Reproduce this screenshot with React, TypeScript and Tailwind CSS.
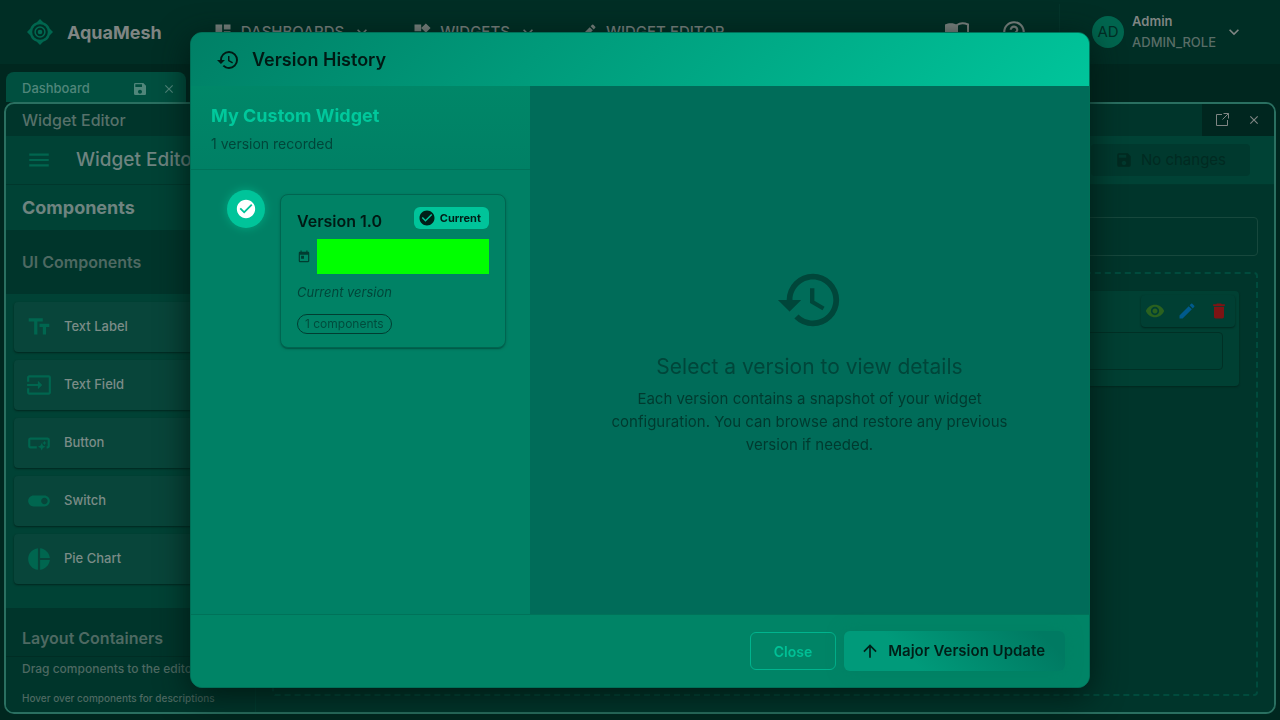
import type { ReactNode } from "react";
import {
  MdArrowUpward,
  MdCheckCircle,
  MdClose,
  MdDashboard,
  MdDelete,
  MdEdit,
  MdHelpOutline,
  MdHistory,
  MdInput,
  MdKeyboardArrowDown,
  MdMenu,
  MdPieChart,
  MdSave,
  MdSmartButton,
  MdTextFields,
  MdToday,
  MdToggleOn,
  MdVisibility,
  MdWidgets,
} from "react-icons/md";

function Logo() {
  return (
    <svg viewBox="0 0 26 26" className="size-[26px]" fill="none" aria-hidden="true">
      <path
        d="M13 0 L16.2 3.2 A10.3 10.3 0 0 1 22.8 9.8 L26 13 L22.8 16.2 A10.3 10.3 0 0 1 16.2 22.8 L13 26 L9.8 22.8 A10.3 10.3 0 0 1 3.2 16.2 L0 13 L3.2 9.8 A10.3 10.3 0 0 1 9.8 3.2 Z"
        fill="#00664f"
      />
      <circle cx="13" cy="13" r="7.8" fill="#002e25" />
      <circle cx="13" cy="13" r="4.9" stroke="#006a52" strokeWidth="1.5" />
      <circle cx="13" cy="13" r="2.3" fill="#006a52" />
    </svg>
  );
}

function BookIcon() {
  return (
    <svg viewBox="0 0 24 20" className="h-5 w-6" fill="none" aria-hidden="true">
      <path d="M12 3C9.500 1 4 .5 0 2.500V18C4 16.500 9 16.500 12 19Z" fill="currentColor" />
      <path d="M12 3C14.500 1.300 19 .9 23 2.500V17.200C19 16 15 16.300 12 18.500Z" stroke="currentColor" strokeWidth="2" />
    </svg>
  );
}

function PopoutIcon() {
  return (
    <svg viewBox="0 0 14 14" className="size-[14px]" fill="none" stroke="currentColor" aria-hidden="true">
      <path d="M7 1.5H1.5V12.5H12.5V7M8.500 .5H13.500V5.500M13.500 .5L7.500 6.500" />
    </svg>
  );
}

function NavButton({ icon, label, arrow }: { icon: ReactNode; label: string; arrow?: boolean }) {
  return (
    <button className="flex items-center gap-2 text-[15px] font-medium text-[#7f8583]">
      <span className="text-[20px]">{icon}</span>
      {label}
      {arrow && <MdKeyboardArrowDown className="size-5" />}
    </button>
  );
}

function Navbar() {
  return (
    <header className="flex h-16 shrink-0 items-center bg-[#002e25] pr-9 pl-[27px] shadow-[0_1px_3px_#001811]">
      <Logo />
      <span className="ml-[14px] text-[18px] font-bold text-[#7f8583]">AquaMesh</span>
      <nav className="ml-[51px] flex items-center gap-10">
        <NavButton icon={<MdDashboard />} label="DASHBOARDS" arrow />
        <NavButton icon={<MdWidgets />} label="WIDGETS" arrow />
        <NavButton icon={<MdEdit />} label="WIDGET EDITOR" />
      </nav>
      <div className="ml-auto flex items-center">
        <button aria-label="Documentation" className="text-[#7f8583]">
          <BookIcon />
        </button>
        <button aria-label="Help" className="ml-8 text-[26px] text-[#7f8583]">
          <MdHelpOutline />
        </button>
        <div className="ml-8 h-14 w-px bg-[#04352b]" />
        <button className="ml-8 flex items-center text-left">
          <span className="flex size-8 items-center justify-center rounded-full bg-[#00664f] text-[15px] text-[#002e25]">
            AD
          </span>
          <span className="ml-2 flex flex-col gap-1">
            <span className="text-[13px] leading-[17px] font-semibold text-[#7f8583]">Admin</span>
            <span className="text-[13px] leading-[17px] font-medium text-[#596d67]">ADMIN_ROLE</span>
          </span>
          <MdKeyboardArrowDown className="ml-2 size-5 text-[#7f8583]" />
        </button>
      </div>
    </header>
  );
}

const components = [
  { label: "Text Label", icon: MdTextFields },
  { label: "Text Field", icon: MdInput },
  { label: "Button", icon: MdSmartButton },
  { label: "Switch", icon: MdToggleOn },
  { label: "Pie Chart", icon: MdPieChart },
];

function Sidebar() {
  return (
    <aside className="flex w-[250px] shrink-0 flex-col border-r border-[#003d31] bg-[#004235]">
      <h2 className="flex h-[45px] shrink-0 items-center px-4 text-[18px] font-bold text-[#6f8480]">Components</h2>
      <h3 className="flex h-16 shrink-0 items-center bg-[#00352b] px-4 text-[16px] font-semibold text-[#4e6962]">
        UI Components
      </h3>
      <ul className="flex shrink-0 flex-col gap-2 p-2">
        {components.map(({ label, icon: Icon }) => (
          <li
            key={label}
            className="flex h-[50px] items-center rounded bg-[#08453a] px-3 text-[13px] font-medium text-[#7b8c87] shadow-[0_1px_2px_#00261e]"
          >
            <Icon className="size-[26px] text-[#00664f]" />
            <span className="ml-3">{label}</span>
          </li>
        ))}
      </ul>
      <h3 className="mt-4 flex min-h-0 flex-1 items-center bg-[#00352b] px-4 pt-3 text-[16px] font-semibold text-[#4e6962]">
        Layout Containers
      </h3>
      <footer className="flex h-14 shrink-0 flex-col justify-between border-t border-[#002d24] bg-[#00352b] px-4 pt-1 pb-2 font-medium whitespace-nowrap text-[#4e6962]">
        <p className="text-[12px] leading-4">Drag components to the editor</p>
        <p className="text-[10px] leading-3">Hover over components for descriptions</p>
      </footer>
    </aside>
  );
}

function Canvas() {
  return (
    <main className="flex min-w-0 flex-1 flex-col gap-4 bg-[#00352b] px-4 pt-8 pb-4">
      <input
        aria-label="Widget name"
        className="h-[39px] shrink-0 rounded border border-[#17483d] bg-transparent px-3 text-[#4e6962]"
      />
      <section className="flex-1 rounded border-2 border-dashed border-[#004b3d] p-[17px]">
        <div className="rounded bg-[#004033] px-4 pt-1 pb-4 shadow-[0_1px_2px_#00261e]">
          <div className="-mr-3 flex justify-end">
            <div className="flex h-8 items-center gap-3 rounded bg-[#003f33] pr-1.5 pl-1 text-[20px] shadow-[0_1px_2px_#00261e]">
              <button aria-label="Show" className="text-[#2a611f]">
                <MdVisibility />
              </button>
              <button aria-label="Edit" className="text-[#005a8c]">
                <MdEdit />
              </button>
              <button aria-label="Delete" className="text-[#7d1414]">
                <MdDelete />
              </button>
            </div>
          </div>
          <input
            aria-label="Text field preview"
            className="mt-[5px] block h-[38px] w-full rounded border border-[#003025] bg-transparent px-3 text-[#4e6962]"
          />
        </div>
      </section>
    </main>
  );
}

function Workspace() {
  return (
    <div className="flex min-h-0 flex-1 flex-col bg-[#00271f] px-1 pt-2 pb-1.5">
      <div className="ml-0.5 flex h-[30px] w-[180px] shrink-0 items-center rounded-t-lg bg-[#004f3f] px-4 pt-1 text-[13px] font-medium text-[#50867a]">
        Dashboard
        <button aria-label="Save dashboard" className="ml-auto">
          <MdSave className="size-4" />
        </button>
        <button aria-label="Close dashboard" className="-mr-1.5 ml-3.5">
          <MdClose className="size-3.5" />
        </button>
      </div>
      <div className="flex min-h-0 flex-1 flex-col overflow-hidden rounded-[10px] border-2 border-[#2a7061] bg-[#00352b]">
        <div className="flex h-8 shrink-0 items-center justify-between pl-4 text-[16px] font-medium text-[#57716a]">
          Widget Editor
          <div className="flex h-full items-center gap-[18px] bg-[#00261f] px-[13px] text-[#7f8583]">
            <button aria-label="Pop out">
              <PopoutIcon />
            </button>
            <button aria-label="Close panel">
              <MdClose className="size-3.5" />
            </button>
          </div>
        </div>
        <div className="flex h-[49px] shrink-0 items-center border-b border-[#00372c] bg-[#004235] pr-6 pl-5">
          <button aria-label="Toggle sidebar">
            <MdMenu className="size-[26px] text-[#00664f]" />
          </button>
          <h1 className="ml-6 text-[19px] font-medium text-[#6f8480]">Widget Editor</h1>
          <button className="ml-auto flex h-8 items-center gap-2 rounded bg-[#00392e] px-6 text-[15px] text-[#002a21]" disabled>
            <MdSave className="size-[18px]" />
            No changes
          </button>
        </div>
        <div className="flex min-h-0 flex-1">
          <Sidebar />
          <Canvas />
        </div>
      </div>
    </div>
  );
}

function VersionCard() {
  return (
    <article className="flex flex-1 flex-col items-start rounded-lg border border-[#006550] bg-[#008265] px-4 pt-3 pb-[13px] shadow-[0_2px_1px_-1px_#005a48,0_1px_3px_#006853]">
      <div className="flex w-full items-center justify-between">
        <h4 className="pt-0.5 text-[16px] leading-6 font-semibold text-[#001a14]">Version 1.0</h4>
        <span className="flex h-[22px] items-center gap-1 self-start rounded-md bg-[#00c49a] pr-2 pl-1 text-[11px] font-bold text-[#001f18]">
          <MdCheckCircle className="size-[18px]" />
          Current
        </span>
      </div>
      <div className="mt-1.5 flex w-full items-center gap-1.5">
        <MdToday className="size-3.5 text-[#003d31]" />
        <time className="h-[35px] flex-1 bg-[#00ff00]" />
      </div>
      <p className="mt-2 text-[13px] leading-5 text-[#00463a] italic">Current version</p>
      <span className="mt-3 flex h-5 items-center rounded-full border border-[#003d31] px-[7px] text-[12px] text-[#004c3d]">
        1 components
      </span>
    </article>
  );
}

function VersionDialog() {
  return (
    <div className="fixed inset-0 flex items-center justify-center p-8">
      <div
        role="dialog"
        aria-modal="true"
        aria-labelledby="dialog-title"
        className="flex h-full w-full max-w-[900px] flex-col overflow-hidden rounded-xl border border-[#007058] bg-[#008265] shadow-[0_8px_32px_#001a14]"
      >
        <header className="flex h-[53px] shrink-0 items-center gap-3 bg-linear-135 from-[#008066] to-[#00c59b] px-[25px] text-[#001a14]">
          <MdHistory className="size-6" />
          <h2 id="dialog-title" className="text-[18px] font-semibold">
            Version History
          </h2>
        </header>
        <div className="flex min-h-0 flex-1">
          <section className="flex w-[339px] shrink-0 flex-col bg-[#008065]">
            <div className="flex h-21 shrink-0 flex-col justify-center gap-1.5 border-b border-[#007259] bg-linear-to-b from-[#008768] to-[#008065] px-5 pt-[3px]">
              <h3 className="text-[18px] leading-6 font-bold text-[#00c89c]">My Custom Widget</h3>
              <p className="text-[14px] leading-5 text-[#00463a]">1 version recorded</p>
            </div>
            <div className="flex items-start gap-[15px] p-6 pl-9">
              <span className="-mt-1 flex size-[38px] items-center justify-center rounded-full bg-[#00c49a] text-white shadow-[0_0_10px_#00a883]">
                <MdCheckCircle className="size-[22px]" />
              </span>
              <VersionCard />
            </div>
          </section>
          <section className="flex flex-1 flex-col items-center justify-center bg-[#006c59] px-6 pt-5 text-center text-[#00463a]">
            <MdHistory className="size-[70px]" />
            <h3 className="mt-4 text-[21px] leading-8">Select a version to view details</h3>
            <p className="mt-1 max-w-[420px] text-[15px] leading-[23px] text-[#003a2f]">
              Each version contains a snapshot of your widget configuration. You can browse and restore any previous
              version if needed.
            </p>
          </section>
        </div>
        <footer className="flex h-[73px] shrink-0 items-center justify-end gap-2 border-t border-[#007259] bg-[#008466] px-6">
          <button className="h-[38px] rounded-md border border-[#00b48e] px-[23px] text-[14px] font-semibold text-[#00c096]">
            Close
          </button>
          <button className="flex h-10 items-center gap-2 rounded-md bg-linear-45 from-[#009a7a] from-30% to-[#007a62] to-90% px-4 pr-5 text-[15px] font-semibold text-[#001f18] shadow-[0_0_16px_#007f63]">
            <MdArrowUpward className="size-5" />
            Major Version Update
          </button>
        </footer>
      </div>
    </div>
  );
}

export default function App() {
  return (
    <div className="flex h-screen flex-col overflow-hidden bg-[#00271f] font-['Inter','Open_Sans',sans-serif]">
      <Navbar />
      <Workspace />
      <VersionDialog />
    </div>
  );
}
